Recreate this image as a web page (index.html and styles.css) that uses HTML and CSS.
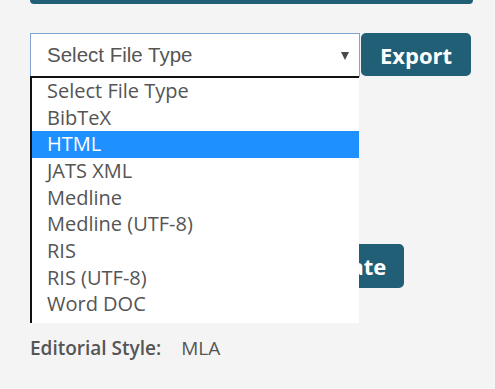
FILE: index.html
```html
<!DOCTYPE html>
<html lang="en">
<head>
    <meta charset="UTF-8">
    <meta name="viewport" content="width=device-width, initial-scale=1.0">
    <title>Export Citation</title>
    <link rel="stylesheet" href="styles.css">
</head>
<body>
    <div class="page">
        <div class="top-bar"></div>

        <div class="export-row">
            <div class="select-wrap">
                <div class="select-box">
                    <span>Select File Type</span>
                    <span class="arrow"></span>
                </div>
                <ul class="select-list">
                    <li>Select File Type</li>
                    <li>BibTeX</li>
                    <li class="active">HTML</li>
                    <li>JATS XML</li>
                    <li>Medline</li>
                    <li>Medline (UTF-8)</li>
                    <li>RIS</li>
                    <li>RIS (UTF-8)</li>
                    <li>Word DOC</li>
                </ul>
            </div>
            <button class="btn">Export</button>
        </div>

        <div class="generate-row">
            <button class="btn btn-generate">Generate</button>
        </div>

        <div class="style-line">
            <span class="style-label">Editorial Style:</span>
            <span class="style-value">MLA</span>
        </div>
    </div>
</body>
</html>
```

FILE: styles.css
```css
body {
    margin: 0;
    background-color: #f4f4f4;
    font-family: "Open Sans", Arial, sans-serif;
    color: #555;
}
.page {
    padding: 0 22px 0 30px;
}
.top-bar {
    height: 4px;
    background: #215f76;
    border-radius: 0 0 6px 6px;
}
.export-row {
    display: flex;
    align-items: flex-start;
    gap: 1px;
    margin-top: 29px;
}
.select-wrap {
    position: relative;
    width: 330px;
}
.select-box {
    box-sizing: border-box;
    height: 44px;
    display: flex;
    align-items: center;
    justify-content: space-between;
    padding: 0 10px 0 16px;
    background: #fff;
    border: 1px solid #7fa3d3;
    font-family: "Liberation Sans", Arial, sans-serif;
    font-size: 20.5px;
    color: #555;
}
.arrow {
    width: 0;
    height: 0;
    border-left: 4.5px solid transparent;
    border-right: 4.5px solid transparent;
    border-top: 8px solid #4a4a4a;
    margin-top: 1px;
}
.select-list {
    position: absolute;
    top: 43px;
    left: 0;
    box-sizing: border-box;
    width: 329px;
    margin: 0;
    padding: 0 0 5px 0;
    list-style: none;
    background: #fff;
    border-top: 2px solid #111;
    border-left: 2px solid #111;
    z-index: 2;
}
.select-list li {
    height: 26.67px;
    line-height: 26.67px;
    padding-left: 15px;
    font-size: 20px;
    color: #555;
}
.select-list li.active {
    background: #1e90ff;
    color: #fff;
}
.btn {
    height: 43px;
    padding: 0 18px;
    background: #215f76;
    color: #fff;
    border: none;
    border-radius: 5px;
    font-family: "Open Sans", Arial, sans-serif;
    font-weight: 700;
    font-size: 22px;
    width: 110px;
}
.generate-row {
    margin-top: 167px;
    padding-left: 236px;
}
.btn-generate {
    width: auto;
    height: 44px;
}
.style-line {
    margin-top: 47px;
    font-size: 19px;
    line-height: 26px;
}
.style-label {
    font-weight: 600;
    margin-right: 15px;
}
```
